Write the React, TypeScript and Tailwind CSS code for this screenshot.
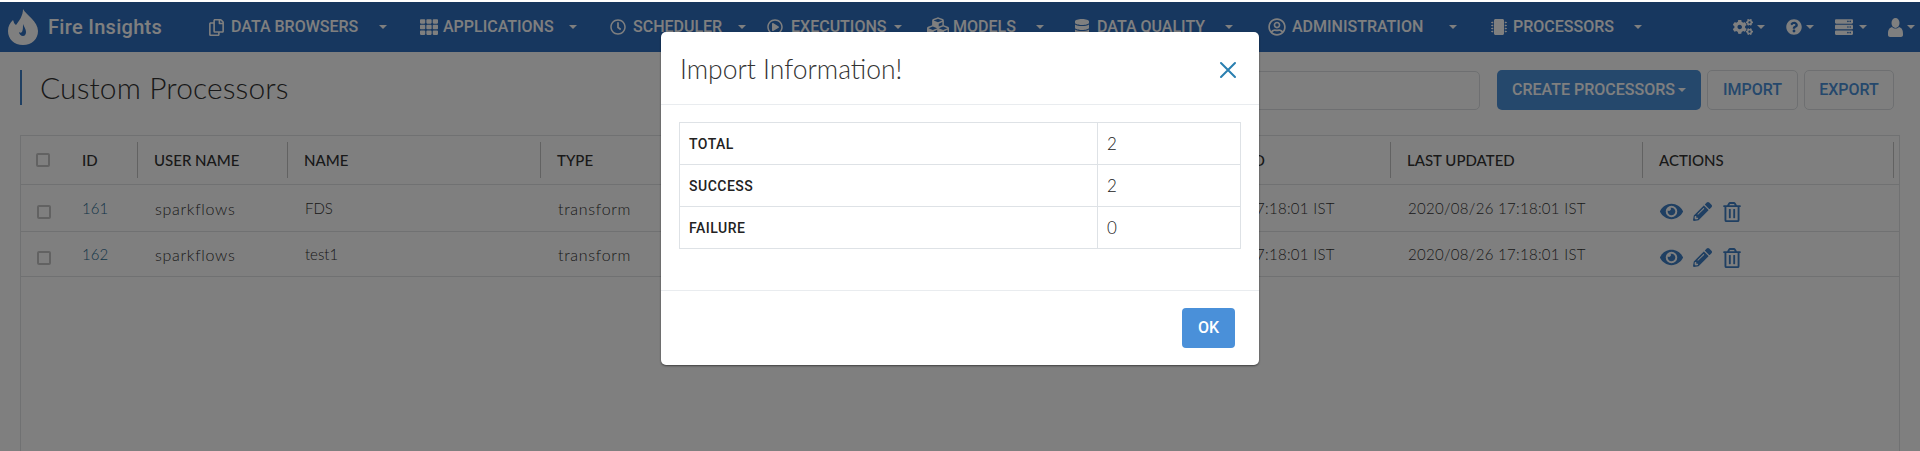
import type { ReactNode } from "react";
import {
  FaRegCopy,
  FaTh,
  FaRegClock,
  FaRegPlayCircle,
  FaCubes,
  FaDatabase,
  FaRegUserCircle,
  FaMicrochip,
  FaCogs,
  FaQuestionCircle,
  FaServer,
  FaEye,
  FaPencilAlt,
  FaRegTrashAlt,
} from "react-icons/fa";
import { IoCloseOutline } from "react-icons/io5";

const Caret = ({ className = "" }: { className?: string }) => (
  <span className={`inline-block border-x-[4px] border-t-[4px] border-x-transparent border-t-white ${className}`} />
);

const FlameLogo = () => (
  <svg width="30" height="36" viewBox="0 0 30 36" fill="#fff" fillRule="evenodd">
    <path d="M15 0c3 6 15 12 15 22 0 8-6 14-15 14S0 30 0 22c0-5 2-8 5-11 1 2 1 4 3 5 3-4 7-9 7-16zM15 15c1 3 3 5 3 8 0 2-1 4-3 4s-4-2-4-4c1 1 2 1 3 0 1-2 1-5 1-8z" />
  </svg>
);

const UserIcon = () => (
  <svg width="15" height="19" viewBox="0 0 15 19" fill="#fff">
    <ellipse cx="7.5" cy="5" rx="4" ry="5" />
    <path d="M4 9c2 2 5 2 7 0 3 1 4 3 4 7v1c0 1-1 2-2 2H2c-1 0-2-1-2-2v-1c0-4 1-6 4-7z" />
  </svg>
);

const navItems: { icon: ReactNode; label: string; width: string; caret: string; iconBox: string }[] = [
  { icon: <FaRegCopy size={17} />, label: "DATA BROWSERS", width: "w-[212px]", caret: "ml-[21px]", iconBox: "w-[23px]" },
  { icon: <FaTh size={18} />, label: "APPLICATIONS", width: "w-[190px]", caret: "ml-[15px]", iconBox: "w-[23px]" },
  { icon: <FaRegClock size={16} />, label: "SCHEDULER", width: "w-[157px]", caret: "ml-[16px]", iconBox: "w-[23px]" },
  { icon: <FaRegPlayCircle size={16} />, label: "EXECUTIONS", width: "w-[160px]", caret: "ml-[8px]", iconBox: "w-[24px]" },
  { icon: <FaCubes size={22} />, label: "MODELS", width: "w-[147px]", caret: "ml-[20px]", iconBox: "w-[26px]" },
  { icon: <FaDatabase size={16} />, label: "DATA QUALITY", width: "w-[194px]", caret: "ml-[20px]", iconBox: "w-[23px]" },
  { icon: <FaRegUserCircle size={18} />, label: "ADMINISTRATION", width: "w-[223px]", caret: "ml-[26px]", iconBox: "w-[24px]" },
  { icon: <FaMicrochip size={16} />, label: "PROCESSORS", width: "w-[150px]", caret: "ml-[20px]", iconBox: "w-[22px]" },
];

const columns = "grid grid-cols-[46px_71px_150px_253px_600px_250px_252px_251px]";

const rows = [
  { id: "161", name: "FDS", height: "h-[47px]" },
  { id: "162", name: "test1", height: "h-[45px]" },
];

const Checkbox = () => <span className="block h-[14px] w-[14px] rounded-[2px] border-2 border-[#c4c4c4] bg-white" />;

function Navbar() {
  return (
    <nav className="flex h-[50px] items-center bg-[#2e6ebe] pl-[8px] text-white">
      <div className="flex w-[200px] items-center">
        <FlameLogo />
        <span className="ml-[10px] font-['Roboto',sans-serif] text-[20px] font-medium tracking-[0.3px]">Fire Insights</span>
      </div>
      {navItems.map((item) => (
        <div key={item.label} className={`flex shrink-0 items-center ${item.width}`}>
          <span className={`flex shrink-0 items-center ${item.iconBox}`}>{item.icon}</span>
          <span className="font-['Roboto',sans-serif] text-[16px] font-medium">{item.label}</span>
          <Caret className={item.caret} />
        </div>
      ))}
      <div className="ml-[92px] flex items-center gap-[4px]">
        <FaCogs size={20} />
        <Caret className="mr-[17px]" />
        <FaQuestionCircle size={16} />
        <Caret className="mr-[17px]" />
        <FaServer size={18} />
        <Caret className="ml-[2px] mr-[17px]" />
        <UserIcon />
        <Caret />
      </div>
    </nav>
  );
}

function Toolbar() {
  return (
    <div className="flex h-[83px] items-start pl-[20px] pr-[26px] pt-[18px]">
      <div className="flex h-[35px] items-center border-l-2 border-[#3f7fc4] pl-[18px] font-['Lato',sans-serif] text-[30px] font-light tracking-[0.1px] text-[#333]">
        Custom Processors
      </div>
      <div className="ml-auto flex items-center gap-[6px]">
        <div className="mr-[11px] h-[39px] w-[300px] rounded-[5px] border border-[#dcdfe3] bg-white" />
        <button className="flex h-[40px] w-[204px] items-center justify-center rounded-[5px] bg-[#4a90d9] font-['Roboto',sans-serif] text-[16px] font-medium text-white">
          CREATE PROCESSORS
          <Caret className="ml-[3px]" />
        </button>
        <button className="h-[40px] w-[91px] rounded-[5px] border border-[#dcdfe3] font-['Roboto',sans-serif] text-[16px] font-medium text-[#4a90d9]">
          IMPORT
        </button>
        <button className="h-[40px] w-[90px] rounded-[5px] border border-[#dcdfe3] font-['Roboto',sans-serif] text-[16px] font-medium text-[#4a90d9]">
          EXPORT
        </button>
      </div>
    </div>
  );
}

function DataTable() {
  return (
    <div className="mx-[20px] h-[320px] border border-[#e0e2e5] font-['Lato',sans-serif] text-[15px] text-[#333]">
      <div className={`${columns} h-[49px] items-center border-b border-[#e0e2e5] font-medium text-[#333]`}>
        <div className="pl-[15px]"><Checkbox /></div>
        <div className="border-r border-[#c4c4c4] pl-[15px] leading-[36px]">ID</div>
        <div className="border-r border-[#c4c4c4] pl-[16px] leading-[36px]">USER NAME</div>
        <div className="border-r border-[#c4c4c4] pl-[16px] leading-[36px]">NAME</div>
        <div className="border-r border-[#c4c4c4] pl-[16px] leading-[36px]">TYPE</div>
        <div className="border-r border-[#c4c4c4] pl-[16px] leading-[36px]">DATE CREATED</div>
        <div className="border-r border-[#c4c4c4] pl-[16px] leading-[36px]">LAST UPDATED</div>
        <div className="border-r border-[#c4c4c4] pl-[16px] leading-[36px]">ACTIONS</div>
      </div>
      {rows.map((row) => (
        <div key={row.id} className={`${columns} ${row.height} items-center border-b border-[#e0e2e5] pt-[1px] font-light`}>
          <div className="mt-[6px] pl-[16px]"><Checkbox /></div>
          <div className="pl-[15px] text-[#1f6a8f]">{row.id}</div>
          <div className="pl-[17px] text-[16px] tracking-[0.7px]">sparkflows</div>
          <div className="pl-[17px]">{row.name}</div>
          <div className="pl-[17px] text-[16px] tracking-[0.7px]">transform</div>
          <div className="pl-[16px] tracking-[0.3px]">2020/08/26 17:18:01 IST</div>
          <div className="pl-[17px] tracking-[0.3px]">2020/08/26 17:18:01 IST</div>
          <div className="mt-[6px] flex items-center gap-[10px] pl-[17px] text-[#3f7fc4]">
            <FaEye size={23} />
            <FaPencilAlt size={19} />
            <FaRegTrashAlt size={20} />
          </div>
        </div>
      ))}
    </div>
  );
}

const summary = [
  { label: "TOTAL", value: "2", height: "h-[41px]" },
  { label: "SUCCESS", value: "2", height: "h-[42px] border-t border-[#dee2e6]" },
  { label: "FAILURE", value: "0", height: "h-[42px] border-t border-[#dee2e6]" },
];

function ImportModal() {
  return (
    <div className="absolute left-[661px] top-[32px] w-[598px] rounded-[5px] bg-white shadow-[0_1px_2px_rgba(0,0,0,0.5)]">
      <div className="flex h-[73px] items-center justify-between border-b border-[#e9ecef] pl-[19px] pr-[15px] pt-[3px]">
        <span className="font-['Lato',sans-serif] text-[26.5px] font-light text-[#333]">Import Information!</span>
        <IoCloseOutline size={32} className="text-[#2a7fb0]" />
      </div>
      <div className="h-[185px] px-[18px] pt-[17px]">
        <div className="border border-[#dee2e6]">
          {summary.map((item) => (
            <div key={item.label} className={`grid grid-cols-[418px_1fr] items-center ${item.height}`}>
              <div className="flex h-full items-center border-r border-[#dee2e6] pl-[9px] pt-[1px] font-['Roboto',sans-serif] text-[14px] font-medium tracking-[0.5px] text-[#222]">
                {item.label}
              </div>
              <div className="pl-[9px] pt-[1px] font-['Lato',sans-serif] text-[17px] font-light text-[#222]">{item.value}</div>
            </div>
          ))}
        </div>
      </div>
      <div className="flex h-[75px] items-start justify-end border-t border-[#e9ecef] pr-[24px] pt-[17px]">
        <button className="h-[40px] w-[53px] rounded-[4px] bg-[#4a90d9] font-['Roboto',sans-serif] text-[16px] font-medium text-white">
          OK
        </button>
      </div>
    </div>
  );
}

export default function App() {
  return (
    <div className="relative h-[451px] overflow-hidden bg-white pt-[2px]">
      <Navbar />
      <Toolbar />
      <DataTable />
      {/* backdrop leaves the top strip undimmed */}
      <div className="absolute inset-x-0 bottom-0 top-[2px] bg-black/50" />
      <ImportModal />
    </div>
  );
}
